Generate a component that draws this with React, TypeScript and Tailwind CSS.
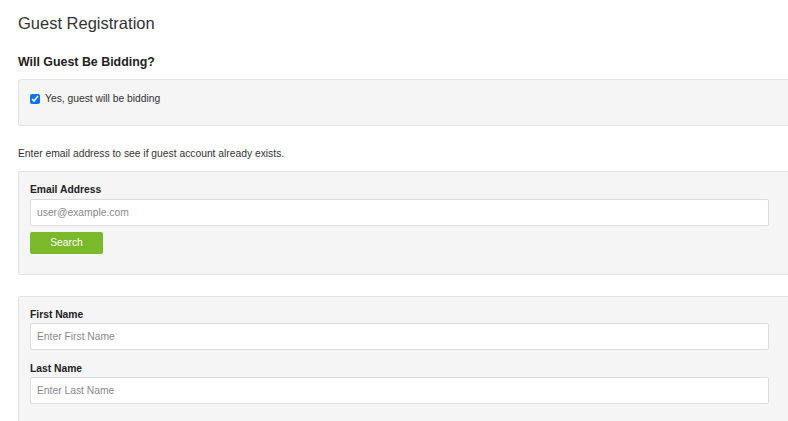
export default function App() {
  const font = { fontFamily: '"Liberation Sans", Arial, sans-serif' };
  return (
    <div className="min-h-screen bg-white text-[#333]" style={font}>
      <div className="pl-[18px]">
        <h1 className="pt-[12px] text-[16.5px] leading-[22px] font-normal text-[#333]">Guest Registration</h1>

        <h2 className="mt-[19px] text-[12.4px] leading-[18px] font-bold text-[#222]">Will Guest Be Bidding?</h2>

        <div className="mt-[8px] h-[47px] border border-[#e3e3e3] border-r-0 bg-[#f5f5f5] rounded-l-[3px] pl-[11px] pt-[11px]">
          <label className="flex items-center gap-[5px] text-[10.3px] leading-[16px] text-[#333]">
            <input type="checkbox" defaultChecked className="w-[10px] h-[10px] m-0 accent-[#0075ff]" />
            Yes, guest will be bidding
          </label>
        </div>

        <p className="mt-[20px] text-[10.3px] leading-[16px] text-[#333]">
          Enter email address to see if guest account already exists.
        </p>

        <div className="mt-[9px] h-[104px] border border-[#e3e3e3] border-r-0 bg-[#f5f5f5] rounded-l-[3px] pl-[11px] pr-[19px] pt-[10px]">
          <div className="text-[10.3px] leading-[16px] font-bold text-[#222]">Email Address</div>
          <input
            type="text"
            placeholder="user@example.com"
            className="mt-[1px] block w-full h-[27px] bg-white border border-[#dcdcdc] rounded-[2px] px-[6px] text-[10.3px] text-[#555] placeholder:text-[#888] outline-none"
          />
          <button className="mt-[6px] block w-[73px] h-[22px] bg-[#7ab929] rounded-[2px] text-white text-[10.3px] leading-[22px]">
            Search
          </button>
        </div>

        <div className="mt-[21px] h-[140px] border border-[#e3e3e3] border-r-0 bg-[#f5f5f5] rounded-l-[3px] pl-[11px] pr-[19px] pt-[10px]">
          <div className="text-[10.3px] leading-[16px] font-bold text-[#222]">First Name</div>
          <input
            type="text"
            placeholder="Enter First Name"
            className="block w-full h-[27px] bg-white border border-[#dcdcdc] rounded-[2px] px-[6px] text-[10.3px] text-[#555] placeholder:text-[#888] outline-none"
          />
          <div className="mt-[11px] text-[10.3px] leading-[16px] font-bold text-[#222]">Last Name</div>
          <input
            type="text"
            placeholder="Enter Last Name"
            className="block w-full h-[27px] bg-white border border-[#dcdcdc] rounded-[2px] px-[6px] text-[10.3px] text-[#555] placeholder:text-[#888] outline-none"
          />
        </div>
      </div>
    </div>
  );
}
